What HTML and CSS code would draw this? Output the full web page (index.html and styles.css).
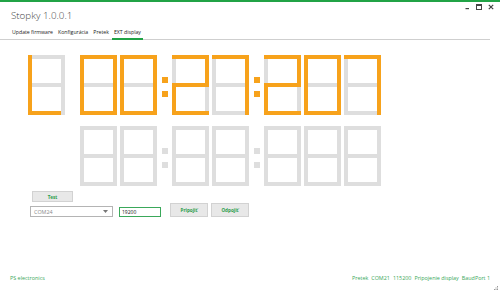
FILE: index.html
```html
<!DOCTYPE html>
<html lang="sk">
<head>
<meta charset="utf-8">
<title>Stopky 1.0.0.1</title>
<link rel="stylesheet" href="styles.css">
</head>
<body>
<div class="window">
  <header class="titlebar">
    <h1 class="title">Stopky 1.0.0.1</h1>
    <div class="winbtns">
      <svg width="5" height="6" viewBox="0 0 5 6"><rect x="0.5" y="4" width="3.5" height="1.2" fill="#444"/></svg>
      <svg width="6" height="6" viewBox="0 0 6 6"><rect x="0.5" y="0.5" width="5" height="5" fill="none" stroke="#444" stroke-width="1"/><rect x="0.5" y="0.5" width="5" height="1.5" fill="#444"/></svg>
      <svg width="6" height="6" viewBox="0 0 6 6"><path d="M0.8 0.8 L5.2 5.2 M5.2 0.8 L0.8 5.2" stroke="#444" stroke-width="1.2"/></svg>
    </div>
  </header>
  <nav class="tabs">
    <span class="tab">Update firmware</span>
    <span class="tab">Konfigurácia</span>
    <span class="tab">Pretek</span>
    <span class="tab active">EXT display</span>
  </nav>
  <main class="content">
    <div class="display row1">
      <!-- L -->
      <svg class="digit lead" viewBox="0 0 37 60"><rect class="off" x="0" y="0" width="37" height="4"/><rect class="off" x="33" y="0" width="4" height="30"/><rect class="off" x="33" y="30" width="4" height="30"/><rect class="off" x="0" y="28" width="37" height="4"/><rect class="on" x="0" y="0" width="4" height="30"/><rect class="on" x="0" y="30" width="4" height="30"/><rect class="on" x="0" y="56" width="33" height="4"/></svg>
      <!-- 0 -->
      <svg class="digit" viewBox="0 0 37 60"><rect class="off" x="0" y="28" width="37" height="4"/><rect class="on" x="0" y="0" width="37" height="4"/><rect class="on" x="0" y="0" width="4" height="30"/><rect class="on" x="33" y="0" width="4" height="30"/><rect class="on" x="0" y="30" width="4" height="30"/><rect class="on" x="33" y="30" width="4" height="30"/><rect class="on" x="0" y="56" width="37" height="4"/></svg>
      <!-- 0 -->
      <svg class="digit" viewBox="0 0 37 60"><rect class="off" x="0" y="28" width="37" height="4"/><rect class="on" x="0" y="0" width="37" height="4"/><rect class="on" x="0" y="0" width="4" height="30"/><rect class="on" x="33" y="0" width="4" height="30"/><rect class="on" x="0" y="30" width="4" height="30"/><rect class="on" x="33" y="30" width="4" height="30"/><rect class="on" x="0" y="56" width="37" height="4"/></svg>
      <svg class="colon" viewBox="0 0 6 60"><rect class="on" x="0" y="22" width="6" height="6"/><rect class="on" x="0" y="36" width="6" height="6"/></svg>
      <!-- 2 -->
      <svg class="digit" viewBox="0 0 37 60"><rect class="off" x="0" y="0" width="4" height="30"/><rect class="off" x="33" y="30" width="4" height="30"/><rect class="on" x="0" y="0" width="37" height="4"/><rect class="on" x="33" y="0" width="4" height="32"/><rect class="on" x="0" y="28" width="37" height="4"/><rect class="on" x="0" y="28" width="4" height="32"/><rect class="on" x="0" y="56" width="37" height="4"/></svg>
      <!-- 7 -->
      <svg class="digit" viewBox="0 0 37 60"><rect class="off" x="0" y="0" width="4" height="30"/><rect class="off" x="0" y="30" width="4" height="30"/><rect class="off" x="0" y="28" width="37" height="4"/><rect class="off" x="0" y="56" width="37" height="4"/><rect class="on" x="0" y="0" width="37" height="4"/><rect class="on" x="33" y="0" width="4" height="30"/><rect class="on" x="33" y="30" width="4" height="30"/></svg>
      <svg class="colon" viewBox="0 0 6 60"><rect class="on" x="0" y="22" width="6" height="6"/><rect class="on" x="0" y="36" width="6" height="6"/></svg>
      <!-- 2 -->
      <svg class="digit" viewBox="0 0 37 60"><rect class="off" x="0" y="0" width="4" height="30"/><rect class="off" x="33" y="30" width="4" height="30"/><rect class="on" x="0" y="0" width="37" height="4"/><rect class="on" x="33" y="0" width="4" height="32"/><rect class="on" x="0" y="28" width="37" height="4"/><rect class="on" x="0" y="28" width="4" height="32"/><rect class="on" x="0" y="56" width="37" height="4"/></svg>
      <!-- 0 -->
      <svg class="digit" viewBox="0 0 37 60"><rect class="off" x="0" y="28" width="37" height="4"/><rect class="on" x="0" y="0" width="37" height="4"/><rect class="on" x="0" y="0" width="4" height="30"/><rect class="on" x="33" y="0" width="4" height="30"/><rect class="on" x="0" y="30" width="4" height="30"/><rect class="on" x="33" y="30" width="4" height="30"/><rect class="on" x="0" y="56" width="37" height="4"/></svg>
      <!-- 7 -->
      <svg class="digit" viewBox="0 0 37 60"><rect class="off" x="0" y="0" width="4" height="30"/><rect class="off" x="0" y="30" width="4" height="30"/><rect class="off" x="0" y="28" width="37" height="4"/><rect class="off" x="0" y="56" width="37" height="4"/><rect class="on" x="0" y="0" width="37" height="4"/><rect class="on" x="33" y="0" width="4" height="30"/><rect class="on" x="33" y="30" width="4" height="30"/></svg>
    </div>
    <div class="display row2">
      <svg class="digit" viewBox="0 0 37 60"><rect class="off" x="0" y="0" width="37" height="4"/><rect class="off" x="0" y="0" width="4" height="60"/><rect class="off" x="33" y="0" width="4" height="60"/><rect class="off" x="0" y="28" width="37" height="4"/><rect class="off" x="0" y="56" width="37" height="4"/></svg>
      <svg class="digit" viewBox="0 0 37 60"><rect class="off" x="0" y="0" width="37" height="4"/><rect class="off" x="0" y="0" width="4" height="60"/><rect class="off" x="33" y="0" width="4" height="60"/><rect class="off" x="0" y="28" width="37" height="4"/><rect class="off" x="0" y="56" width="37" height="4"/></svg>
      <svg class="colon" viewBox="0 0 6 60"><rect class="off" x="0" y="22" width="6" height="6"/><rect class="off" x="0" y="36" width="6" height="6"/></svg>
      <svg class="digit" viewBox="0 0 37 60"><rect class="off" x="0" y="0" width="37" height="4"/><rect class="off" x="0" y="0" width="4" height="60"/><rect class="off" x="33" y="0" width="4" height="60"/><rect class="off" x="0" y="28" width="37" height="4"/><rect class="off" x="0" y="56" width="37" height="4"/></svg>
      <svg class="digit" viewBox="0 0 37 60"><rect class="off" x="0" y="0" width="37" height="4"/><rect class="off" x="0" y="0" width="4" height="60"/><rect class="off" x="33" y="0" width="4" height="60"/><rect class="off" x="0" y="28" width="37" height="4"/><rect class="off" x="0" y="56" width="37" height="4"/></svg>
      <svg class="colon" viewBox="0 0 6 60"><rect class="off" x="0" y="22" width="6" height="6"/><rect class="off" x="0" y="36" width="6" height="6"/></svg>
      <svg class="digit" viewBox="0 0 37 60"><rect class="off" x="0" y="0" width="37" height="4"/><rect class="off" x="0" y="0" width="4" height="60"/><rect class="off" x="33" y="0" width="4" height="60"/><rect class="off" x="0" y="28" width="37" height="4"/><rect class="off" x="0" y="56" width="37" height="4"/></svg>
      <svg class="digit" viewBox="0 0 37 60"><rect class="off" x="0" y="0" width="37" height="4"/><rect class="off" x="0" y="0" width="4" height="60"/><rect class="off" x="33" y="0" width="4" height="60"/><rect class="off" x="0" y="28" width="37" height="4"/><rect class="off" x="0" y="56" width="37" height="4"/></svg>
      <svg class="digit" viewBox="0 0 37 60"><rect class="off" x="0" y="0" width="37" height="4"/><rect class="off" x="0" y="0" width="4" height="60"/><rect class="off" x="33" y="0" width="4" height="60"/><rect class="off" x="0" y="28" width="37" height="4"/><rect class="off" x="0" y="56" width="37" height="4"/></svg>
    </div>
    <div class="controls">
      <button class="btn test">Test</button>
      <div class="ctrl-row">
        <div class="combo">
          <span>COM24</span>
          <svg width="5" height="3" viewBox="0 0 5 3"><path d="M0 0 H5 L2.5 3 Z" fill="#777"/></svg>
        </div>
        <div class="input">19200</div>
        <button class="btn action">Pripojiť</button>
        <button class="btn action">Odpojiť</button>
      </div>
    </div>
  </main>
  <footer class="statusbar">
    <span class="brand">PS electronics</span>
    <div class="status">
      <span>Pretek</span>
      <span>COM21</span>
      <span>115200</span>
      <span>Pripojenie display</span>
      <span>BaudPort 1</span>
    </div>
    <svg class="grip" width="4" height="4" viewBox="0 0 4 4"><rect x="3" y="0" width="1" height="1" fill="#999"/><rect x="1.5" y="1.5" width="1" height="1" fill="#999"/><rect x="3" y="1.5" width="1" height="1" fill="#999"/><rect x="0" y="3" width="1" height="1" fill="#999"/><rect x="1.5" y="3" width="1" height="1" fill="#999"/><rect x="3" y="3" width="1" height="1" fill="#999"/></svg>
  </footer>
</div>
</body>
</html>
```

FILE: styles.css
```css
* { box-sizing: border-box; }
html, body { margin: 0; padding: 0; background: #fff; }
body {
  width: 500px;
  height: 292px;
  overflow: hidden;
  font-family: "Open Sans", "Noto Sans", sans-serif;
  color: #222;
}
.window {
  position: relative;
  width: 500px;
  height: 292px;
  border-top: 2px solid #21a346;
  display: flex;
  flex-direction: column;
}
.titlebar {
  display: flex;
  justify-content: space-between;
  align-items: flex-start;
  padding: 0 6px 0 11px;
}
.title {
  margin: 7px 0 0 0;
  font-size: 9.8px;
  line-height: 13px;
  font-weight: 300;
  color: #444;
}
.winbtns {
  display: flex;
  gap: 6px;
  margin-top: 2px;
  align-items: flex-start;
}
.winbtns svg { display: block; }
.tabs {
  display: flex;
  gap: 1px;
  margin: 5px 10px 0 0;
  padding-left: 10px;
  border-bottom: 1px solid #cfcfcf;
  height: 13px;
  align-items: stretch;
}
.tab {
  font-size: 5.2px;
  line-height: 11px;
  padding: 0 2px;
  color: #222;
  white-space: nowrap;
}
.tab.active {
  border-bottom: 2px solid #21a346;
  margin-bottom: -1px;
}
.content {
  display: flex;
  flex-direction: column;
}
.display {
  display: flex;
  gap: 3px;
  align-items: flex-start;
}
.row1 { margin: 15px 0 0 28px; }
.row2 { margin: 11px 0 0 80px; }
.digit { width: 37px; height: 60px; display: block; flex: none; }
.digit.lead { margin-right: 12px; }
.colon { width: 6px; height: 60px; display: block; flex: none; margin: 0 1px 0 2px; }
.on { fill: #f7a21b; }
.off { fill: #dedede; }
.controls {
  display: flex;
  flex-direction: column;
  padding-left: 30px;
  margin-top: 5px;
}
.btn {
  font-family: inherit;
  font-size: 4.6px;
  font-weight: 700;
  color: #2a9d48;
  background: #e8e8e8;
  border: 1px solid #d2d2d2;
  padding: 0;
  margin: 0;
}
.test {
  width: 41px;
  height: 11px;
  margin-left: 2px;
}
.ctrl-row {
  display: flex;
  align-items: flex-end;
  margin-top: 1px;
}
.combo {
  width: 83px;
  height: 11px;
  border: 1px solid #b4b4b4;
  display: flex;
  align-items: center;
  justify-content: space-between;
  padding: 0 4px 0 3px;
  font-size: 5.4px;
  color: #8a8a8a;
}
.combo svg { display: block; }
.input {
  width: 42px;
  height: 10px;
  margin-left: 6px;
  border: 1px solid #3aa85a;
  font-size: 5px;
  line-height: 8px;
  padding-left: 2px;
  color: #111;
}
.action {
  width: 38px;
  height: 14px;
  margin-left: 9px;
}
.action + .action { margin-left: 3px; }
.statusbar {
  margin-top: auto;
  height: 28px;
  display: flex;
  justify-content: space-between;
  align-items: center;
  padding: 0 10px;
  font-size: 5.4px;
  color: #3aa85a;
}
.status { display: flex; gap: 3px; }
.grip {
  position: absolute;
  right: 2px;
  bottom: 2px;
}
```
